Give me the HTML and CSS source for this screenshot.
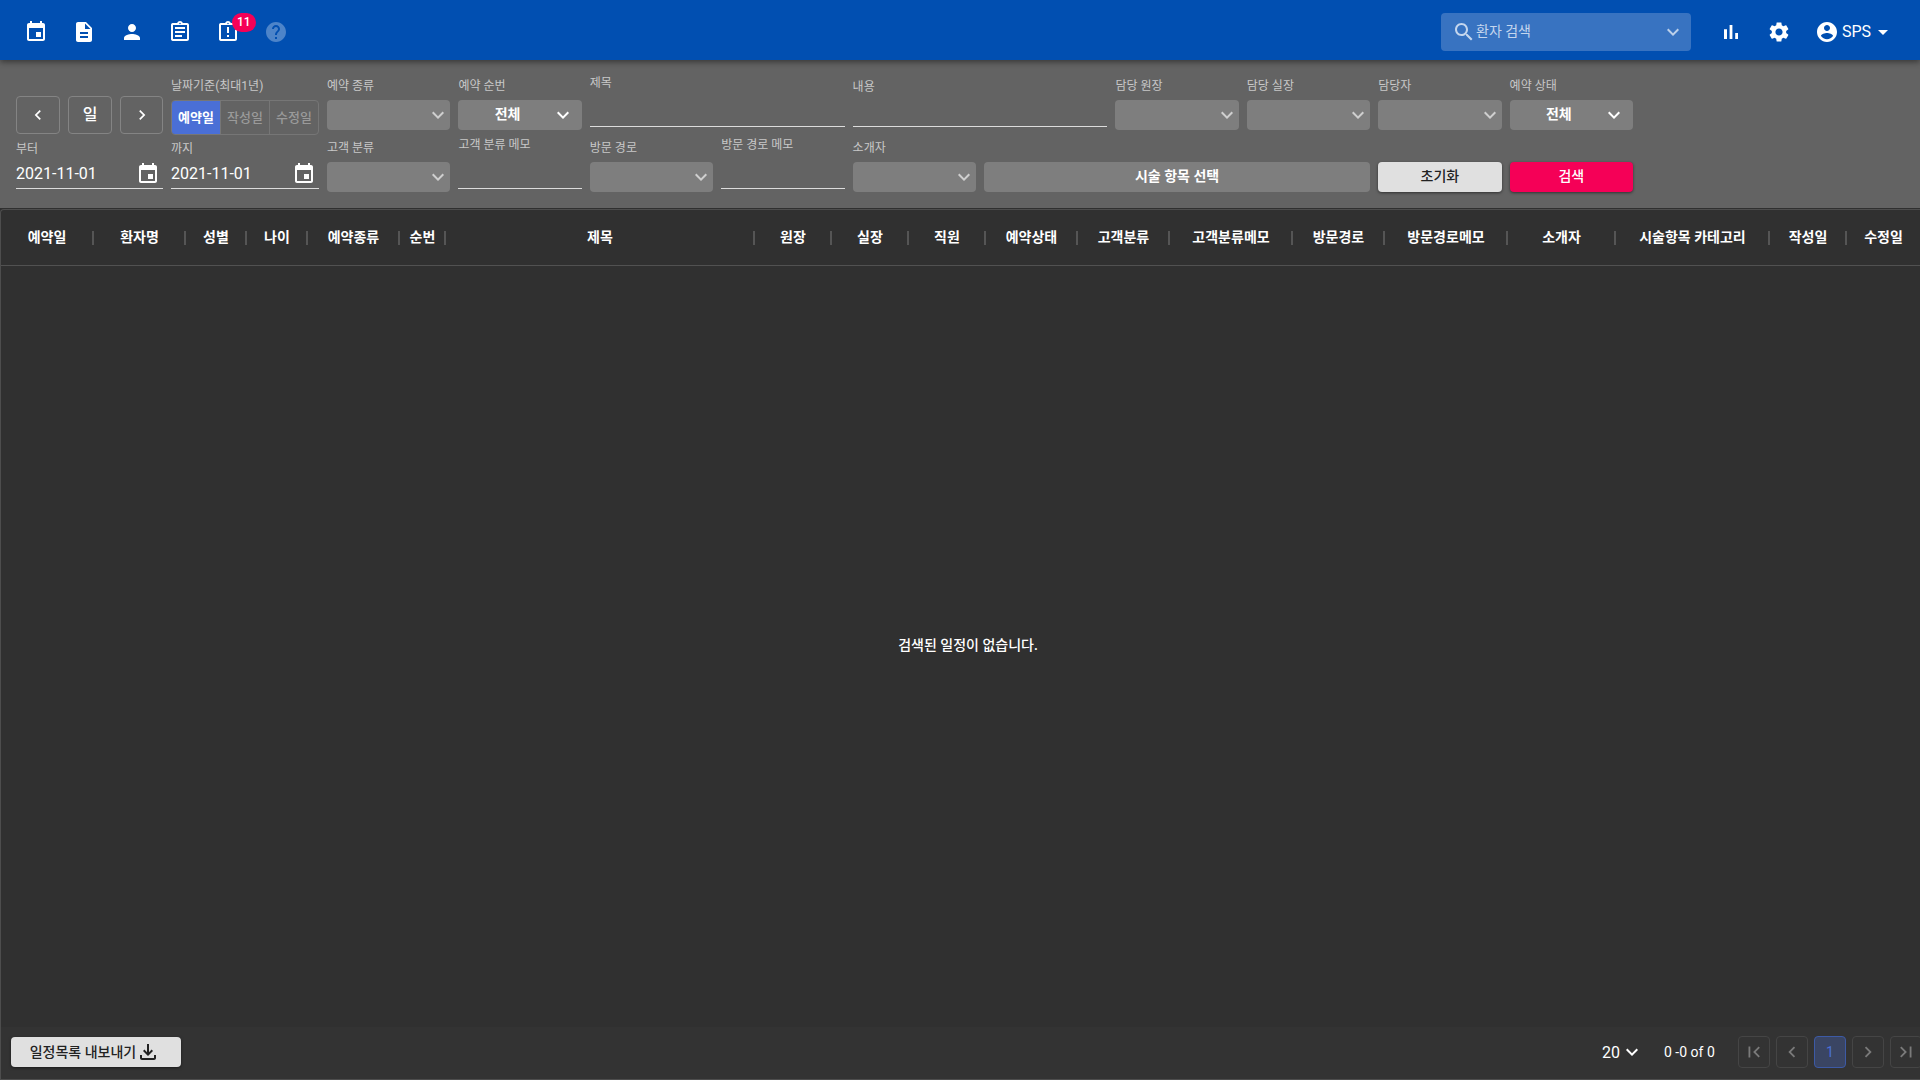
FILE: index.html
```html
<!DOCTYPE html>
<html lang="ko">
<head>
    <meta charset="UTF-8">
    <title>예약 목록</title>
    <link rel="stylesheet" href="styles.css">
</head>
<body>
<svg class="sprite" xmlns="http://www.w3.org/2000/svg">
    <symbol id="i-event" viewBox="0 0 24 24"><path d="M17 12h-5v5h5v-5zM16 1v2H8V1H6v2H5c-1.11 0-1.99.9-1.99 2L3 19c0 1.1.89 2 2 2h14c1.1 0 2-.9 2-2V5c0-1.1-.9-2-2-2h-1V1h-2zm3 18H5V8h14v11z"/></symbol>
    <symbol id="i-doc" viewBox="0 0 24 24"><path d="M14 2H6c-1.1 0-1.99.9-1.99 2L4 20c0 1.1.89 2 1.99 2H18c1.1 0 2-.9 2-2V8l-6-6zm2 16H8v-2h8v2zm0-4H8v-2h8v2zm-3-5V3.5L18.5 9H13z"/></symbol>
    <symbol id="i-person" viewBox="0 0 24 24"><path d="M12 12c2.21 0 4-1.79 4-4s-1.79-4-4-4-4 1.79-4 4 1.79 4 4 4zm0 2c-2.67 0-8 1.34-8 4v2h16v-2c0-2.66-5.33-4-8-4z"/></symbol>
    <symbol id="i-assign" viewBox="0 0 24 24"><path d="M7 15h7v2H7zm0-4h10v2H7zm0-4h10v2H7zm12-4h-4.18C14.4 1.84 13.3 1 12 1c-1.3 0-2.4.84-2.82 2H5c-.14 0-.27.01-.4.04-.39.08-.74.28-1.01.55-.18.18-.33.4-.43.64-.1.23-.16.49-.16.77v14c0 .27.06.54.16.78s.25.45.43.64c.27.27.62.47 1.01.55.13.02.26.03.4.03h14c1.1 0 2-.9 2-2V5c0-1.1-.9-2-2-2zm-7-.25c.41 0 .75.34.75.75s-.34.75-.75.75-.75-.34-.75-.75.34-.75.75-.75zM19 19H5V5h14v14z"/></symbol>
    <symbol id="i-late" viewBox="0 0 24 24"><path d="M11 15h2v2h-2zm0-8h2v6h-2zm8-4h-4.18C14.4 1.84 13.3 1 12 1c-1.3 0-2.4.84-2.82 2H5c-.14 0-.27.01-.4.04-.39.08-.74.28-1.01.55-.18.18-.33.4-.43.64-.1.23-.16.49-.16.77v14c0 .27.06.54.16.78s.25.45.43.64c.27.27.62.47 1.01.55.13.02.26.03.4.03h14c1.1 0 2-.9 2-2V5c0-1.1-.9-2-2-2zm-7-.25c.41 0 .75.34.75.75s-.34.75-.75.75-.75-.34-.75-.75.34-.75.75-.75zM19 19H5V5h14v14z"/></symbol>
    <symbol id="i-help" viewBox="0 0 24 24"><path d="M12 2C6.48 2 2 6.48 2 12s4.48 10 10 10 10-4.48 10-10S17.52 2 12 2zm1 17h-2v-2h2v2zm2.07-7.75l-.9.92C13.45 12.9 13 13.5 13 15h-2v-.5c0-1.1.45-2.1 1.17-2.83l1.24-1.26c.37-.36.59-.86.59-1.41 0-1.1-.9-2-2-2s-2 .9-2 2H8c0-2.21 1.79-4 4-4s4 1.79 4 4c0 .88-.36 1.68-.93 2.25z"/></symbol>
    <symbol id="i-search" viewBox="0 0 24 24"><path d="M15.5 14h-.79l-.28-.27C15.41 12.59 16 11.11 16 9.5 16 5.91 13.09 3 9.5 3S3 5.91 3 9.5 5.91 16 9.5 16c1.61 0 3.09-.59 4.23-1.57l.27.28v.79l5 4.99L20.49 19l-4.99-5zm-6 0C7.01 14 5 11.99 5 9.5S7.01 5 9.5 5 14 7.01 14 9.5 11.99 14 9.5 14z"/></symbol>
    <symbol id="i-more" viewBox="0 0 24 24"><path d="M16.59 8.59L12 13.17 7.41 8.59 6 10l6 6 6-6z"/></symbol>
    <symbol id="i-bars" viewBox="0 0 24 24"><path d="M5 9.2h3V19H5zM10.6 5h2.8v14h-2.8zm5.6 8H19v6h-2.8z"/></symbol>
    <symbol id="i-gear" viewBox="0 0 24 24"><path d="M19.14 12.94c.04-.3.06-.61.06-.94 0-.32-.02-.64-.07-.94l2.03-1.58c.18-.14.23-.41.12-.61l-1.92-3.32c-.12-.22-.37-.29-.59-.22l-2.39.96c-.5-.38-1.03-.7-1.62-.94l-.36-2.54c-.04-.24-.24-.41-.48-.41h-3.84c-.24 0-.43.17-.47.41l-.36 2.54c-.59.24-1.13.57-1.62.94l-2.39-.96c-.22-.08-.47 0-.59.22L2.74 8.87c-.12.21-.08.47.12.61l2.03 1.58c-.05.3-.09.63-.09.94s.02.64.07.94l-2.03 1.58c-.18.14-.23.41-.12.61l1.92 3.32c.12.22.37.29.59.22l2.39-.96c.5.38 1.03.7 1.62.94l.36 2.54c.05.24.24.41.48.41h3.84c.24 0 .44-.17.47-.41l.36-2.54c.59-.24 1.13-.56 1.62-.94l2.39.96c.22.08.47 0 .59-.22l1.92-3.32c.12-.22.07-.47-.12-.61l-2.01-1.58zM12 15.6c-1.98 0-3.6-1.62-3.6-3.6s1.62-3.6 3.6-3.6 3.6 1.62 3.6 3.6-1.62 3.6-3.6 3.6z"/></symbol>
    <symbol id="i-account" viewBox="0 0 24 24"><path d="M12 2C6.48 2 2 6.48 2 12s4.48 10 10 10 10-4.48 10-10S17.52 2 12 2zm0 3c1.66 0 3 1.34 3 3s-1.34 3-3 3-3-1.34-3-3 1.34-3 3-3zm0 14.2c-2.5 0-4.71-1.28-6-3.22.03-1.99 4-3.08 6-3.08 1.99 0 5.97 1.09 6 3.08-1.29 1.94-3.5 3.22-6 3.22z"/></symbol>
    <symbol id="i-caret" viewBox="0 0 24 24"><path d="M7 10l5 5 5-5z"/></symbol>
    <symbol id="i-left" viewBox="0 0 24 24"><path d="M15.41 7.41L14 6l-6 6 6 6 1.41-1.41L10.83 12z"/></symbol>
    <symbol id="i-right" viewBox="0 0 24 24"><path d="M10 6L8.59 7.41 13.17 12l-4.58 4.59L10 18l6-6z"/></symbol>
    <symbol id="i-first" viewBox="0 0 24 24"><path d="M18.41 16.59L13.82 12l4.59-4.59L17 6l-6 6 6 6zM6 6h2v12H6z"/></symbol>
    <symbol id="i-last" viewBox="0 0 24 24"><path d="M5.59 7.41L10.18 12l-4.59 4.59L7 18l6-6-6-6zM16 6h2v12h-2z"/></symbol>
    <symbol id="i-download" viewBox="0 0 24 24"><path d="M18 15v3H6v-3H4v3c0 1.1.9 2 2 2h12c1.1 0 2-.9 2-2v-3h-2zm-1-4l-1.41-1.41L13 12.17V4h-2v8.17L8.41 9.59 7 11l5 5 5-5z"/></symbol>
</svg>

<header class="topbar">
    <nav class="top-icons">
        <a class="top-icon"><svg class="ic"><use href="#i-event"/></svg></a>
        <a class="top-icon"><svg class="ic"><use href="#i-doc"/></svg></a>
        <a class="top-icon"><svg class="ic"><use href="#i-person"/></svg></a>
        <a class="top-icon"><svg class="ic"><use href="#i-assign"/></svg></a>
        <a class="top-icon"><svg class="ic"><use href="#i-late"/></svg><span class="badge">11</span></a>
        <a class="top-icon help"><svg class="ic"><use href="#i-help"/></svg></a>
    </nav>
    <div class="top-right">
        <div class="patient-search">
            <svg class="ic"><use href="#i-search"/></svg>
            <span class="patient-text">환자 검색</span>
            <svg class="ic more"><use href="#i-more"/></svg>
        </div>
        <a class="top-icon"><svg class="ic"><use href="#i-bars"/></svg></a>
        <a class="top-icon"><svg class="ic"><use href="#i-gear"/></svg></a>
        <a class="user"><svg class="ic"><use href="#i-account"/></svg><span class="user-name">SPS</span><svg class="ic caret"><use href="#i-caret"/></svg></a>
    </div>
</header>

<section class="filters">
    <div class="date-block">
        <div class="nav-btns">
            <button class="nav-btn"><svg class="ic"><use href="#i-left"/></svg></button>
            <button class="nav-btn day">일</button>
            <button class="nav-btn"><svg class="ic"><use href="#i-right"/></svg></button>
        </div>
        <div class="date-type">
            <label class="lbl">날짜기준(최대1년)</label>
            <div class="toggle">
                <span class="seg on">예약일</span>
                <span class="seg">작성일</span>
                <span class="seg">수정일</span>
            </div>
        </div>
        <div class="date-field">
            <label class="lbl">부터</label>
            <div class="date-input">2021-11-01<svg class="ic"><use href="#i-event"/></svg></div>
        </div>
        <div class="date-field">
            <label class="lbl">까지</label>
            <div class="date-input">2021-11-01<svg class="ic"><use href="#i-event"/></svg></div>
        </div>
    </div>

    <div class="filter-grid">
        <div class="field"><label class="lbl">예약 종류</label><div class="sel"><svg class="ic"><use href="#i-more"/></svg></div></div>
        <div class="field"><label class="lbl">예약 순번</label><div class="sel val"><span>전체</span><svg class="ic"><use href="#i-more"/></svg></div></div>
        <div class="field txt title-field span-2"><label class="lbl">제목</label><div class="line"></div></div>
        <div class="field txt body-field span-2"><label class="lbl">내용</label><div class="line"></div></div>
        <div class="field"><label class="lbl">담당 원장</label><div class="sel"><svg class="ic"><use href="#i-more"/></svg></div></div>
        <div class="field"><label class="lbl">담당 실장</label><div class="sel"><svg class="ic"><use href="#i-more"/></svg></div></div>
        <div class="field"><label class="lbl">담당자</label><div class="sel"><svg class="ic"><use href="#i-more"/></svg></div></div>
        <div class="field"><label class="lbl">예약 상태</label><div class="sel val"><span>전체</span><svg class="ic"><use href="#i-more"/></svg></div></div>

        <div class="field"><label class="lbl">고객 분류</label><div class="sel"><svg class="ic"><use href="#i-more"/></svg></div></div>
        <div class="field txt memo-field"><label class="lbl">고객 분류 메모</label><div class="line"></div></div>
        <div class="field"><label class="lbl">방문 경로</label><div class="sel"><svg class="ic"><use href="#i-more"/></svg></div></div>
        <div class="field txt memo-field"><label class="lbl">방문 경로 메모</label><div class="line"></div></div>
        <div class="field"><label class="lbl">소개자</label><div class="sel"><svg class="ic"><use href="#i-more"/></svg></div></div>
        <button class="btn treat span-3">시술 항목 선택</button>
        <button class="btn reset">초기화</button>
        <button class="btn find">검색</button>
    </div>
</section>

<section class="table">
    <div class="thead">
        <div class="th">예약일</div>
        <div class="th">환자명</div>
        <div class="th">성별</div>
        <div class="th">나이</div>
        <div class="th">예약종류</div>
        <div class="th">순번</div>
        <div class="th">제목</div>
        <div class="th">원장</div>
        <div class="th">실장</div>
        <div class="th">직원</div>
        <div class="th">예약상태</div>
        <div class="th">고객분류</div>
        <div class="th">고객분류메모</div>
        <div class="th">방문경로</div>
        <div class="th">방문경로메모</div>
        <div class="th">소개자</div>
        <div class="th">시술항목 카테고리</div>
        <div class="th">작성일</div>
        <div class="th">수정일</div>
    </div>
    <div class="tbody">검색된 일정이 없습니다.</div>
    <footer class="tfoot">
        <button class="btn export"><span>일정목록 내보내기</span><svg class="ic"><use href="#i-download"/></svg></button>
        <div class="pager">
            <div class="page-size">20<svg class="ic"><use href="#i-more"/></svg></div>
            <div class="page-count">0 -0 of 0</div>
            <div class="pages">
                <span class="page"><svg class="ic"><use href="#i-first"/></svg></span>
                <span class="page"><svg class="ic"><use href="#i-left"/></svg></span>
                <span class="page on">1</span>
                <span class="page"><svg class="ic"><use href="#i-right"/></svg></span>
                <span class="page"><svg class="ic"><use href="#i-last"/></svg></span>
            </div>
        </div>
    </footer>
</section>
</body>
</html>
```

FILE: styles.css
```css
* { box-sizing: border-box; }
html, body { height: 100%; }
body {
    margin: 0; height: 1080px; overflow: hidden; display: flex; flex-direction: column;
    background: #303030; color: #fff;
    font-family: Roboto, "Noto Sans CJK KR", sans-serif; font-size: 14px;
}
button { font-family: inherit; padding: 0; cursor: pointer; }
.sprite { display: none; }
.ic { width: 24px; height: 24px; fill: currentColor; flex: none; display: block; }

/* top bar */
.topbar {
    height: 60px; flex: none; position: relative; z-index: 2;
    display: flex; justify-content: space-between; align-items: center;
    padding: 4px 29px 0 12px;
    background: #014fb1;
    box-shadow: 0 2px 6px rgba(0,0,0,.45);
}
.top-icons { display: flex; gap: 0; }
.top-icon { width: 48px; height: 48px; display: flex; align-items: center; justify-content: center; position: relative; color: #fff; }
.top-icon.help { color: #4d84c9; }
.badge {
    position: absolute; top: 5px; left: 28px;
    min-width: 22px; height: 19px; border-radius: 10px; padding: 0 5px;
    background: #f50057; color: #fff;
    font-size: 12px; font-weight: 500; line-height: 19px; text-align: center;
}
.top-right { display: flex; align-items: center; }
.patient-search {
    width: 250px; height: 38px; margin-right: 16px; padding: 0 6px 0 11px;
    display: flex; align-items: center;
    background: #3873c1; border-radius: 4px; color: #c4d6ee;
}
.patient-text { flex: 1; font-size: 14px; margin: -4px 0 0 0; }
.patient-search .more { color: #bcd0ea; }
.user { display: flex; align-items: center; margin-left: 12px; width: 76px; color: #fff; font-size: 16px; }
.user-name { margin-left: 3px; margin-top: -2px; }
.caret { margin-left: 0; }

/* filter panel */
.filters {
    height: 148px; flex: none; display: flex; gap: 8px;
    padding: 16px 16px 16px 16px;
    background: #636363;
}
.lbl { display: block; height: 18px; line-height: 18px; margin-top: 1px; font-size: 12px; color: #c8c8c8; white-space: nowrap; }

.date-block {
    width: 303px; flex: none;
    display: grid; grid-template-columns: 147px 148px; column-gap: 8px; row-gap: 4px;
    grid-template-rows: 59px 50px;
}
.nav-btns { display: flex; justify-content: space-between; align-self: end; margin-bottom: 1px; }
.nav-btn {
    width: 44px; height: 38px; display: flex; align-items: center; justify-content: center;
    background: none; border: 1px solid #848484; border-radius: 4px; color: #fff;
}
.nav-btn:last-child { width: 43px; }
.nav-btn .ic { width: 20px; height: 20px; }
.nav-btn.day { font-size: 16px; font-weight: 500; padding-bottom: 4px; }
.toggle { display: flex; height: 35px; margin-top: 5px; border: 1px solid #767676; border-radius: 4px; overflow: hidden; }
.seg {
    flex: 1; display: flex; align-items: center; justify-content: center; padding-bottom: 2px;
    font-size: 13px; font-weight: 500; color: #9a9a9a;
    border-left: 1px solid #767676;
}
.seg:first-child { border-left: 0; }
.seg.on { background: #4a6fd6; color: #fff; font-weight: 700; }
.date-input {
    height: 31px; padding: 3px 0 2px; display: flex; align-items: center; justify-content: space-between;
    font-size: 16px; border-bottom: 1px solid #dcdcdc; color: #fff;
}
.date-input .ic { margin-right: 3px; }

.filter-grid {
    width: 1306px; flex: none;
    display: grid; grid-template-columns: repeat(10, 1fr); column-gap: 8px; row-gap: 8px;
    grid-template-rows: 54px 54px;
}
.span-2 { grid-column: span 2; }
.span-3 { grid-column: span 3; }
.field { display: flex; flex-direction: column; min-width: 0; }
.sel {
    height: 30px; margin-top: 5px;
    display: flex; align-items: center; justify-content: flex-end;
    background: #7e7e7e; border-radius: 4px; color: #cfcfcf;
}
.sel.val { padding-right: 7px; color: #fff; font-weight: 700; justify-content: space-between; }
.sel.val span { flex: 1; text-align: center; margin-top: -4px; padding-left: 6px; }
.txt { margin-bottom: 3px; }
.title-field { margin-top: -3px; }
.body-field { margin-top: 1px; }
.memo-field { margin-top: -3px; }
.line { flex: 1; border-bottom: 1px solid #dcdcdc; }
.btn { border: 0; border-radius: 4px; font-size: 14px; font-weight: 500; align-self: end; height: 30px; padding-bottom: 5px; }
.treat { background: #7e7e7e; color: #fff; font-weight: 700; }
.reset { background: #e0e0e0; color: #222; box-shadow: 0 1px 3px rgba(0,0,0,.5); }
.find { background: #f50057; color: #fff; box-shadow: 0 1px 3px rgba(0,0,0,.5); }

/* table */
.table {
    flex: 1; min-height: 0; display: flex; flex-direction: column;
    margin-top: 1px; background: #303030;
    border: 1px solid #4d4d4d; border-right: 0; border-radius: 4px 0 0 0;
}
.thead {
    height: 56px; flex: none; display: grid;
    grid-template-columns: 93px 92px 61px 61px 92px 46px 309px 77px 77px 77px 92px 92px 123px 92px 123px 108px 154px 77px 1fr;
    border-bottom: 1px solid #515151;
}
.th {
    display: flex; align-items: center; justify-content: center; padding: 0 1px 4px 0;
    font-weight: 700; white-space: nowrap;
    background: linear-gradient(#555, #555) right center / 2px 14px no-repeat;
}
.th:last-child { background: none; padding-right: 0; }
.tbody { flex: 1; display: flex; align-items: center; justify-content: center; padding: 0 0 5px 15px; font-weight: 500; }
.tfoot {
    height: 52px; flex: none; padding: 0 0 3px 10px;
    display: flex; align-items: center; justify-content: space-between;
    background: #333;
}
.export {
    width: 170px; height: 30px; display: flex; align-items: center; justify-content: center; padding: 0 2px 0 0;
    background: #e0e0e0; color: #222; align-self: center; box-shadow: 0 1px 3px rgba(0,0,0,.5);
}
.export span { margin-top: -2px; }
.export .ic { width: 24px; height: 24px; margin-top: 1px; }
.pager { display: flex; align-items: center; padding-top: 1px; }
.page-size { display: flex; align-items: center; font-size: 16px; width: 48px; }
.page-size .ic { width: 24px; height: 24px; }
.page-count { margin-left: 14px; width: 74px; }
.pages { display: flex; gap: 6px; width: 182px; overflow: hidden; }
.page {
    width: 32px; height: 32px; flex: none; display: flex; align-items: center; justify-content: center;
    border: 1px solid #454545; border-radius: 4px; color: #7a7a7a;
}
.page .ic { width: 22px; height: 22px; }
.page.on { background: #3a4563; border-color: #3d5aa5; color: #4a6fd6; }
```
